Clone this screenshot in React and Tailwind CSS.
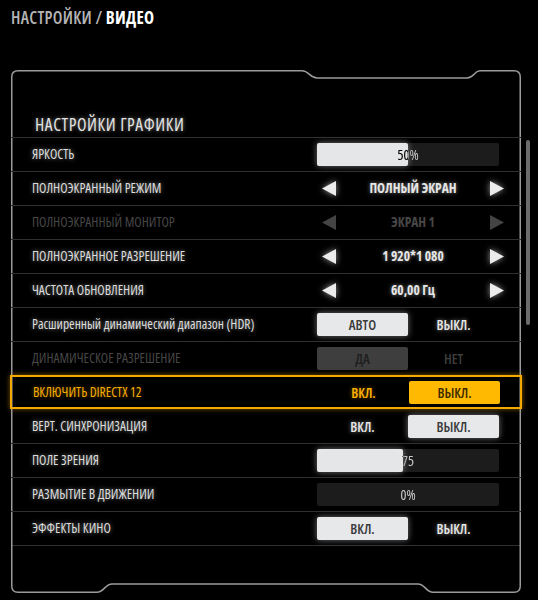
import React from 'react';

const FONT = "font-['Open_Sans',sans-serif] [font-stretch:75%]";
const GLOW = "[text-shadow:0_0_4px_rgba(255,255,255,0.5)]";

const rows = [
  { label: 'ЯРКОСТЬ', type: 'slider', value: 50, text: '50%' },
  { label: 'ПОЛНОЭКРАННЫЙ РЕЖИМ', type: 'arrows', text: 'ПОЛНЫЙ ЭКРАН' },
  { label: 'ПОЛНОЭКРАННЫЙ МОНИТОР', type: 'arrows', text: 'ЭКРАН 1', disabled: true },
  { label: 'ПОЛНОЭКРАННОЕ РАЗРЕШЕНИЕ', type: 'arrows', text: '1 920*1 080' },
  { label: 'ЧАСТОТА ОБНОВЛЕНИЯ', type: 'arrows', text: '60,00 Гц' },
  { label: 'Расширенный динамический диапазон (HDR)', type: 'toggle', options: ['АВТО', 'ВЫКЛ.'], selected: 0 },
  { label: 'ДИНАМИЧЕСКОЕ РАЗРЕШЕНИЕ', type: 'toggle', options: ['ДА', 'НЕТ'], selected: 0, disabled: true },
  { label: 'ВКЛЮЧИТЬ DIRECTX 12', type: 'toggle', options: ['ВКЛ.', 'ВЫКЛ.'], selected: 1, focused: true },
  { label: 'ВЕРТ. СИНХРОНИЗАЦИЯ', type: 'toggle', options: ['ВКЛ.', 'ВЫКЛ.'], selected: 1 },
  { label: 'ПОЛЕ ЗРЕНИЯ', type: 'slider', value: 47, text: '75' },
  { label: 'РАЗМЫТИЕ В ДВИЖЕНИИ', type: 'slider', value: 0, text: '0%' },
  { label: 'ЭФФЕКТЫ КИНО', type: 'toggle', options: ['ВКЛ.', 'ВЫКЛ.'], selected: 0 },
];

// рамка панели с вырезами сверху и снизу
function Frame() {
  return (
    <svg className="absolute inset-0 pointer-events-none" width="510" height="523" viewBox="0 0 510 523" fill="none">
      <path
        d="M0.75 516 L0.75 7 Q0.75 0.75 7 0.75 L291 0.75 C298 0.75 299 8 306 8 L456 8 C463 8 463 0.75 469 0.75 L503 0.75 Q509.25 0.75 509.25 7 L509.25 516 Q509.25 522.25 503 522.25 L422 522.25 C415 522.25 414 514 407 514 L101 514 C94 514 93 522.25 86 522.25 L7 522.25 Q0.75 522.25 0.75 516 Z"
        stroke="#9b9b9b"
        strokeWidth="1.5"
      />
    </svg>
  );
}

function Triangle({ dir, disabled }) {
  const points = dir === 'left' ? '14,0 14,15 0,7.5' : '0,0 0,15 14,7.5';
  return (
    <svg
      width="14"
      height="15"
      viewBox="0 0 14 15"
      className={disabled ? '' : 'drop-shadow-[0_0_3px_rgba(255,255,255,0.6)]'}
    >
      <polygon points={points} fill={disabled ? '#444' : '#ececec'} />
    </svg>
  );
}

function Slider({ value, text }) {
  return (
    <div className="ml-[306px] relative isolate w-[182px] h-[23px] bg-[#1c1c1c] rounded-[2px]">
      {value > 0 && (
        <div
          className="h-full bg-[#e4e6e8] rounded-[2px] shadow-[0_0_6px_rgba(255,255,255,0.45)]"
          style={{ width: `${value}%` }}
        />
      )}
      <div className="absolute inset-0 flex items-center justify-center text-[14px] text-[#e8e8e8] mix-blend-difference">
        {text}
      </div>
    </div>
  );
}

function Arrows({ text, disabled }) {
  return (
    <div className="ml-[311px] w-[182px] flex items-center justify-between">
      <Triangle dir="left" disabled={disabled} />
      <span className={`text-[13.5px] font-bold ${disabled ? 'text-[#474747]' : `text-[#e6e6e6] ${GLOW}`}`}>{text}</span>
      <Triangle dir="right" disabled={disabled} />
    </div>
  );
}

function Toggle({ options, selected, disabled, focused }) {
  return (
    <div className="ml-[306px] w-[182px] flex">
      {options.map((opt, i) => {
        const on = i === selected;
        let cls = '';
        if (focused) {
          cls = on ? 'bg-[#ffb900] text-[#3d2b00]' : `text-[#ffb400] [text-shadow:0_0_4px_rgba(255,170,0,0.5)]`;
        } else if (disabled) {
          cls = on ? 'bg-[#3e3e3e] text-[#1e1e1e]' : 'text-[#3e3e3e]';
        } else {
          cls = on
            ? 'bg-[#e6e8ea] text-[#3a3a3a] shadow-[0_0_6px_rgba(255,255,255,0.45)]'
            : `text-[#e6e6e6] ${GLOW}`;
        }
        return (
          <div
            key={opt}
            className={`w-[91px] h-[23px] rounded-[2px] flex items-center justify-center text-[14px] font-semibold ${cls}`}
          >
            {opt}
          </div>
        );
      })}
    </div>
  );
}

function Row({ row, prevFocused }) {
  const base = 'absolute left-0 h-[34px] w-full flex items-center';
  let labelCls = `text-[#dcdcdc] ${GLOW}`;
  if (row.disabled) labelCls = 'text-[#474747]';
  if (row.focused) labelCls = 'text-[#f5ad00] [text-shadow:0_0_4px_rgba(255,170,0,0.45)]';

  const border = row.focused
    ? 'border-2 border-[#f2a900] shadow-[0_0_5px_rgba(255,170,0,0.5)] -mx-px w-[512px]'
    : prevFocused
      ? ''
      : 'border-t border-[#303030]';

  return (
    <div className={`relative h-[34px] flex items-center ${border}`}>
      <div className={`${base} pl-[21px]`}>
        <span className={`text-[13.5px] font-medium whitespace-nowrap ${labelCls}`}>{row.label}</span>
      </div>
      <div className={base}>
        {row.type === 'slider' && <Slider value={row.value} text={row.text} />}
        {row.type === 'arrows' && <Arrows text={row.text} disabled={row.disabled} />}
        {row.type === 'toggle' && (
          <Toggle options={row.options} selected={row.selected} disabled={row.disabled} focused={row.focused} />
        )}
      </div>
    </div>
  );
}

export default function App() {
  return (
    <div className={`w-[538px] h-[600px] bg-black overflow-hidden ${FONT}`}>
      <div className="pt-[8px] pl-[11px] h-[28px] text-[17px] leading-[20px] font-semibold tracking-[0.3px]">
        <span className="text-[#b4b4b4]">НАСТРОЙКИ / </span>
        <span className="text-white font-bold">ВИДЕО</span>
      </div>

      <div className="mt-[42px] ml-[11px] relative w-[510px] h-[523px]">
        <Frame />
        <div className="pt-[44px]">
          <div className={`h-[23px] leading-[20px] pl-[24px] text-[17.5px] font-medium tracking-[0.6px] text-[#e2e2e2] ${GLOW}`}>
            НАСТРОЙКИ ГРАФИКИ
          </div>
          <div>
            {rows.map((row, i) => (
              <Row key={row.label} row={row} prevFocused={i > 0 && rows[i - 1].focused} />
            ))}
            <div className="border-t border-[#303030]" />
          </div>
        </div>
        {/* полоса прокрутки */}
        <div className="absolute left-[515px] top-[70px] w-[4px] h-[185px] rounded-full bg-[#6b6b6b]" />
      </div>
    </div>
  );
}
